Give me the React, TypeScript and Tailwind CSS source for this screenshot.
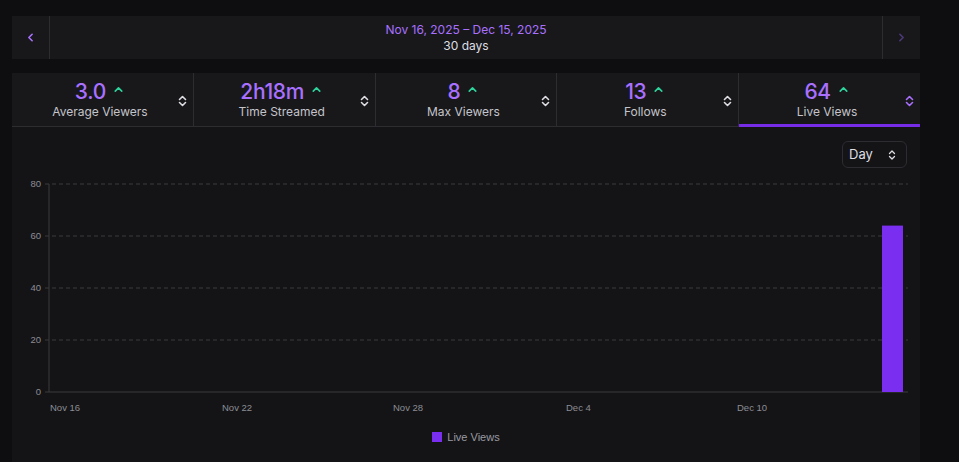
import { ChevronLeft, ChevronRight, ChevronUp, ChevronsUpDown } from 'lucide-react'

interface Stat {
  value: string
  label: string
  active?: boolean
}

const stats: Stat[] = [
  { value: '3.0', label: 'Average Viewers' },
  { value: '2h18m', label: 'Time Streamed' },
  { value: '8', label: 'Max Viewers' },
  { value: '13', label: 'Follows' },
  { value: '64', label: 'Live Views', active: true },
]

const yTicks = [80, 60, 40, 20, 0]
const xTicks = [
  { label: 'Nov 16', x: 38 },
  { label: 'Nov 22', x: 210 },
  { label: 'Nov 28', x: 381 },
  { label: 'Dec 4', x: 554 },
  { label: 'Dec 10', x: 725 },
]

// plot area inside svg coords
const PLOT_LEFT = 37
const PLOT_RIGHT = 896
const PLOT_TOP = 8
const PLOT_BOTTOM = 216

function SortIcon({ active }: { active?: boolean }) {
  return (
    <svg width="9" height="12" viewBox="0 0 9 12" aria-hidden="true" className={active ? 'text-[#a970ff]' : 'text-[#dedee3]'}>
      <path d="M1.5 4.5 4.5 1.5 7.5 4.5" fill="none" stroke="currentColor" strokeWidth="1.6" strokeLinecap="round" strokeLinejoin="round" />
      <path d="M1.5 7.5 4.5 10.5 7.5 7.5" fill="none" stroke="currentColor" strokeWidth="1.6" strokeLinecap="round" strokeLinejoin="round" />
    </svg>
  )
}

function StatCell({ stat, last }: { stat: Stat; last: boolean }) {
  return (
    <div className={`relative flex flex-1 items-center ${last ? '' : 'border-r border-[#2c2c31]'}`}>
      <div className="flex flex-1 flex-col items-center pl-[10px]">
        <div className="flex items-center gap-[6px] leading-none">
          <span className="text-[21px] font-medium text-[#a970ff] tracking-[-0.3px]">{stat.value}</span>
          <ChevronUp size={13} strokeWidth={3} className="mb-[4px] text-[#2ed39c]" />
        </div>
        <span className="mt-[4px] text-[12px] leading-none text-[#c4c4ca]">{stat.label}</span>
      </div>
      <div className="pr-[6px] pt-[2px]">
        <SortIcon active={stat.active} />
      </div>
      {stat.active && <div className="absolute bottom-[-1px] left-0 right-0 h-[3px] bg-[#772ce8]" />}
    </div>
  )
}

function Chart() {
  const yFor = (v: number) => PLOT_BOTTOM - (v / 80) * (PLOT_BOTTOM - PLOT_TOP)
  return (
    <svg width="908" height="240" viewBox="0 0 908 240" className="block" style={{ fontFamily: '"Liberation Sans", Arial, sans-serif' }}>
      {yTicks.map((t) => (
        <g key={t}>
          {t !== 0 && (
            <line x1={PLOT_LEFT - 4} x2={PLOT_RIGHT} y1={yFor(t)} y2={yFor(t)} stroke="#3a3a3f" strokeWidth="1" strokeDasharray="4 3" />
          )}
          <text x={PLOT_LEFT - 8} y={yFor(t) + 3} textAnchor="end" fontSize="9.5" fill="#8c8c93">
            {t}
          </text>
        </g>
      ))}
      <line x1={PLOT_LEFT} x2={PLOT_LEFT} y1={PLOT_TOP} y2={PLOT_BOTTOM} stroke="#3a3a3f" strokeWidth="1" />
      <line x1={PLOT_LEFT - 4} x2={PLOT_RIGHT} y1={PLOT_BOTTOM} y2={PLOT_BOTTOM} stroke="#3a3a3f" strokeWidth="1" />
      <rect x={870} y={yFor(64)} width={21} height={PLOT_BOTTOM - yFor(64)} fill="#7a2ff0" />
      {xTicks.map((t) => (
        <text key={t.label} x={t.x} y={235} fontSize="9.5" fill="#8c8c93">
          {t.label}
        </text>
      ))}
    </svg>
  )
}

export default function App() {
  return (
    <div className="h-[462px] w-[959px] overflow-hidden bg-[#0e0e10] pt-[16px] pl-[12px]" style={{ fontFamily: 'Inter, "Noto Sans", sans-serif' }}>
      <div className="w-[908px]">
        {/* date range */}
        <div className="flex h-[43px] bg-[#18181b]">
          <button className="flex w-[38px] items-center justify-center border-r border-[#2c2c31] text-[#a970ff]">
            <ChevronLeft size={13} strokeWidth={3} />
          </button>
          <div className="flex flex-1 flex-col items-center justify-center gap-[4px] leading-none">
            <span className="text-[12px] text-[#a970ff]">Nov 16, 2025 – Dec 15, 2025</span>
            <span className="text-[12px] text-[#dedee3]">30 days</span>
          </div>
          <button className="flex w-[38px] items-center justify-center border-l border-[#2c2c31] text-[#4b3a78]">
            <ChevronRight size={13} strokeWidth={3} />
          </button>
        </div>

        {/* stats */}
        <div className="mt-[14px] flex h-[54px] border-b border-[#2c2c31] bg-[#18181b]">
          {stats.map((s, i) => (
            <StatCell key={s.label} stat={s} last={i === stats.length - 1} />
          ))}
        </div>

        {/* chart panel */}
        <div className="h-[400px] bg-[#141417]">
          <div className="flex justify-end pt-[14px] pr-[13px]">
            <div className="flex h-[27px] w-[65px] items-center justify-between rounded-[6px] border border-[#2c2c31] pl-[6px] pr-[8px] text-[13px] text-[#dedee3]">
              <span>Day</span>
              <ChevronsUpDown size={12} strokeWidth={2.6} />
            </div>
          </div>
          <div className="mt-[8px]">
            <Chart />
          </div>
          <div className="mt-[13px] flex items-center justify-center gap-[5px]" style={{ fontFamily: '"Liberation Sans", Arial, sans-serif' }}>
            <span className="h-[10px] w-[10px] bg-[#7a2ff0]" />
            <span className="text-[11px] text-[#9a9aa1]">Live Views</span>
          </div>
        </div>
      </div>
    </div>
  )
}
